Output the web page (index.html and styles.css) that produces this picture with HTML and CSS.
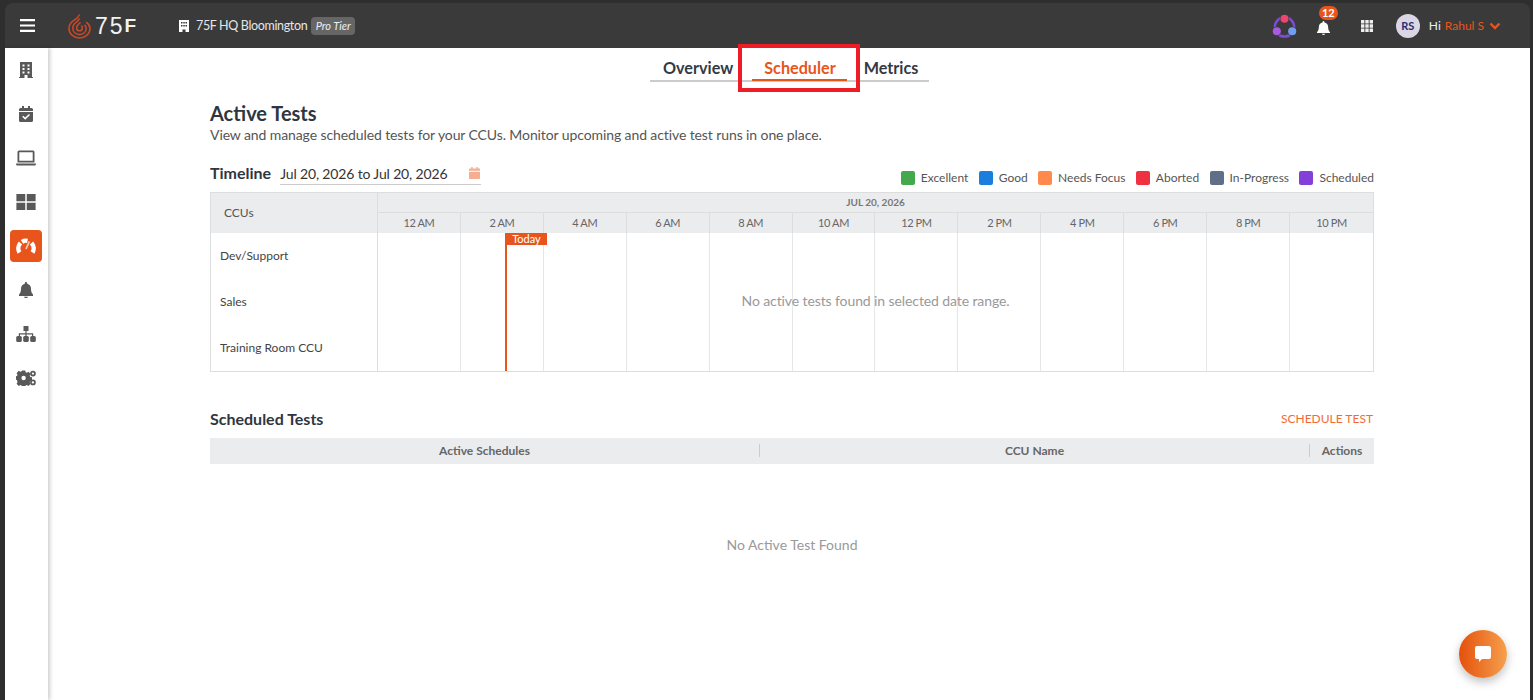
FILE: index.html
```html
<!DOCTYPE html>
<html lang="en">
<head>
    <meta charset="UTF-8">
    <meta name="viewport" content="width=device-width, initial-scale=1.0">
    <title>75F Scheduler</title>
    <link rel="stylesheet" href="styles.css">
</head>
<body>
<div class="app">
    <header class="topbar">
        <div class="top-left">
            <svg class="menu-icon" viewBox="0 0 14 12"><path d="M0 0h14v2H0zM0 5h14v2H0zM0 10h14v2H0z"/></svg>
            <svg class="flame" viewBox="0 0 24 26" fill="none" stroke="#c8482a" stroke-width="1.600">
                <path d="M12 1 C11 4 8 6 5 8 C2 10.500 1 13 1 15.500 A11 10 0 0 0 23 15.500 C23 12.500 21 10.500 19 9"/>
                <path d="M12 5 C11 8 8 9 6.500 11 C5 13 5 14.500 5 15.500 A7 6.500 0 0 0 19 15.500 C19 14 18 12.500 17 12"/>
                <path d="M13 9 C11.500 11 9 12 9 15 A3 3 0 0 0 15 15 C15 14 14.500 13 13.500 13"/>
            </svg>
            <span class="brand">75<small>F</small></span>
            <svg class="site-icon" viewBox="0 0 10 12"><path fill-rule="evenodd" d="M0 0h10v12H6.500V9.500h-3V12H0zM2 2v1.500h1.500V2zM4.300 2v1.500h1.500V2zM6.500 2v1.500H8V2zM2 5v1.500h1.500V5zM4.300 5v1.500h1.500V5zM6.500 5v1.500H8V5z"/></svg>
            <span class="site-name">75F HQ Bloomington</span>
            <span class="tier">Pro Tier</span>
        </div>
        <div class="top-right">
            <svg class="apps-logo" viewBox="0 0 26 26">
                <circle cx="13" cy="14.500" r="10" fill="none" stroke="#7a4fd0" stroke-width="2.600"/>
                <circle cx="13" cy="6" r="5" fill="#3a3a3a"/>
                <circle cx="5" cy="19" r="5" fill="#3a3a3a"/>
                <circle cx="21" cy="19" r="5" fill="#3a3a3a"/>
                <circle cx="13" cy="6" r="4.200" fill="#ee4472"/>
                <circle cx="5" cy="19" r="4.200" fill="#a75be0"/>
                <circle cx="21" cy="19" r="4.200" fill="#6f9df0"/>
            </svg>
            <div class="bell-wrap">
                <svg class="bell" viewBox="0 0 14 15"><path d="M7 0a1 1 0 0 1 1 1v.7c2.400.4 4 2.400 4 4.800 0 3.200 1 4.300 2 5.500v1H0v-1c1-1.200 2-2.300 2-5.500 0-2.400 1.600-4.400 4-4.800V1a1 1 0 0 1 1-1zM5.200 13.800h3.600a1.800 1.200 0 0 1-3.600 0z"/></svg>
                <span class="badge">12</span>
            </div>
            <svg class="grid-icon" viewBox="0 0 12 12"><path d="M0 0h3.400v3.400H0zM4.300 0h3.400v3.400H4.300zM8.600 0H12v3.400H8.600zM0 4.300h3.400v3.400H0zM4.300 4.300h3.400v3.400H4.300zM8.600 4.300H12v3.400H8.600zM0 8.600h3.400V12H0zM4.300 8.600h3.400V12H4.300zM8.600 8.600H12V12H8.600z"/></svg>
            <span class="avatar">RS</span>
            <span class="hi">Hi</span>
            <span class="user">Rahul S</span>
            <svg class="chevron" viewBox="0 0 12 8"><path d="M1.500 1.500 6 6l4.500-4.500" fill="none" stroke="#e8551c" stroke-width="2.400"/></svg>
        </div>
    </header>

    <div class="page">
        <nav class="sidebar">
            <a class="side-item"><svg viewBox="0 0 14 16"><path fill-rule="evenodd" d="M1 0h12v15h1v1H8.500v-3h-3v3H0v-1h1zM3.500 2.500v2H5.500v-2zM8.500 2.500v2h2v-2zM3.500 6v2H5.500V6zM8.500 6v2h2V6zM3.500 9.500v2H5.500v-2zM8.500 9.500v2h2v-2z"/></svg></a>
            <a class="side-item"><svg viewBox="0 0 14 16"><path fill-rule="evenodd" d="M3 0h2v2h4V0h2v2h1.500A1.500 1.500 0 0 1 14 3.500V5H0V3.500A1.500 1.500 0 0 1 1.500 2H3zM0 6h14v8.500a1.500 1.500 0 0 1-1.500 1.500h-11A1.500 1.500 0 0 1 0 14.500zM10 8 6.200 11.600 4.200 9.700 3.200 10.700 6.200 13.700 11 9z"/></svg></a>
            <a class="side-item"><svg class="wide" viewBox="0 0 20 15"><path fill-rule="evenodd" d="M3 0h14a1.500 1.500 0 0 1 1.500 1.500V12h-17V1.500A1.500 1.500 0 0 1 3 0zM3.300 1.800v8.400h13.400V1.800zM0 13h20v.5a1.500 1.500 0 0 1-1.500 1.500h-17A1.500 1.500 0 0 1 0 13.500z"/></svg></a>
            <a class="side-item"><svg class="wide" viewBox="0 0 18 15"><path d="M0 0h8.300v6.800H0zM9.700 0H18v6.800H9.700zM0 8.200h8.300V15H0zM9.700 8.200H18V15H9.700z"/></svg></a>
            <a class="side-item active"><svg class="wide" viewBox="0 0 20 16" fill="none" stroke="#fff" stroke-width="4.400"><path d="M3.500 14.500A7.800 7.800 0 0 1 4.500 5"/><path d="M6 3.800A7.800 7.800 0 0 1 11.500 2.800"/><path d="M15.500 5A7.800 7.800 0 0 1 16.500 14.500"/><path d="M10 11 13.300 3.500" stroke-width="1.800" stroke="#f6c9b4"/></svg></a>
            <a class="side-item"><svg viewBox="0 0 14 16"><path d="M7 0a1.200 1.200 0 0 1 1.200 1.200v.6C10.700 2.300 12 4.300 12 6.800c0 3.400 1 4.600 2 5.700V14H0v-1.500c1-1.100 2-2.300 2-5.700 0-2.500 1.300-4.500 3.800-5v-.6A1.200 1.200 0 0 1 7 0zM5 14.800h4A2 1.300 0 0 1 5 14.800z"/></svg></a>
            <a class="side-item"><svg class="wide" viewBox="0 0 20 16">
                <path d="M7.500 0h5v5h-5zM2.800 7.200h14.400v3h-1.200V8.400H10.600v1.800H9.400V8.400H4v1.800H2.800zM9.400 5h1.200v3H9.400z"/>
                <rect x="0.200" y="10" width="5.600" height="6" rx="1.500"/>
                <rect x="7.200" y="10" width="5.600" height="6" rx="1.500"/>
                <rect x="14.200" y="10" width="5.600" height="6" rx="1.500"/>
            </svg></a>
            <a class="side-item"><svg class="wide" viewBox="0 0 21 16">
                <path fill-rule="evenodd" d="M6.300 1.500h3.400l.4 1.900 1.300.6 1.700-1 2.300 2.400-1 1.600.6 1.400 1.800.4v3.400l-1.800.4-.6 1.400 1 1.600-2.300 2.300-1.700-1-1.300.6-.4 1.500H6.300l-.4-1.500-1.300-.6-1.700 1-2.300-2.300 1-1.600L1 11.600 0 11.300V7.700l1-.3.6-1.400-1-1.600 2.300-2.400 1.700 1 1.300-.6zM8 7.200a2.300 2.300 0 1 0 0 4.600 2.300 2.300 0 0 0 0-4.600z" transform="translate(0 -1.500)"/>
                <circle cx="17.800" cy="3.300" r="2.100" fill="none" stroke="#595959" stroke-width="1.800"/>
                <circle cx="17.800" cy="12.700" r="2.100" fill="none" stroke="#595959" stroke-width="1.800"/>
            </svg></a>
        </nav>

        <main class="content">
            <div class="tabs">
                <a class="tab">Overview</a>
                <a class="tab tab-active">Scheduler</a>
                <a class="tab">Metrics</a>
            </div>
            <div class="highlight"></div>

            <h1 class="heading">Active Tests</h1>
            <p class="sub">View and manage scheduled tests for your CCUs. Monitor upcoming and active test runs in one place.</p>

            <div class="timeline-bar">
                <h2 class="section-title">Timeline</h2>
                <div class="date-range">
                    <span>Jul 20, 2026 to Jul 20, 2026</span>
                    <svg class="cal-icon" viewBox="0 0 12 13"><path d="M2.500 0h1.500v1.500h4V0h1.500v1.500h1A1 1 0 0 1 12 2.500V4H0V2.500a1 1 0 0 1 1-1h1.500zM0 5h12v7a1 1 0 0 1-1 1H1a1 1 0 0 1-1-1z"/></svg>
                </div>
                <ul class="legend">
                    <li><i class="dot excellent"></i>Excellent</li>
                    <li><i class="dot good"></i>Good</li>
                    <li><i class="dot focus"></i>Needs Focus</li>
                    <li><i class="dot aborted"></i>Aborted</li>
                    <li><i class="dot progress"></i>In-Progress</li>
                    <li><i class="dot scheduled"></i>Scheduled</li>
                </ul>
            </div>

            <div class="timeline">
                <div class="ccu-head">CCUs</div>
                <div class="date-head">JUL 20, 2026</div>
                <div class="hours">
                    <span>12 AM</span><span>2 AM</span><span>4 AM</span><span>6 AM</span><span>8 AM</span><span>10 AM</span>
                    <span>12 PM</span><span>2 PM</span><span>4 PM</span><span>6 PM</span><span>8 PM</span><span>10 PM</span>
                </div>
                <div class="ccu-list">
                    <div>Dev/Support</div>
                    <div>Sales</div>
                    <div>Training Room CCU</div>
                </div>
                <div class="track">
                    <i></i><i></i><i></i><i></i><i></i><i></i><i></i><i></i><i></i><i></i><i></i><i></i>
                    <div class="today"><span>Today</span></div>
                    <div class="no-tests">No active tests found in selected date range.</div>
                </div>
            </div>

            <div class="sched-head">
                <h2 class="section-title">Scheduled Tests</h2>
                <a class="sched-link">SCHEDULE TEST</a>
            </div>
            <div class="sched-table">
                <div class="col-a">Active Schedules</div>
                <div class="col-b">CCU Name</div>
                <div class="col-c">Actions</div>
            </div>
            <div class="empty">No Active Test Found</div>
        </main>
    </div>

    <button class="chat"><svg viewBox="0 0 16 16"><path d="M2 0h12a2 2 0 0 1 2 2v9a2 2 0 0 1-2 2H7l-3 3v-3H2a2 2 0 0 1-2-2V2a2 2 0 0 1 2-2z"/></svg></button>
</div>
</body>
</html>
```

FILE: styles.css
```css
* {
    padding: 0;
    margin: 0;
    box-sizing: border-box;
}
html, body {
    height: 100%;
    background: #2e2e2e;
    font-family: Lato, "Open Sans", Arial, sans-serif;
    overflow: hidden;
}
.app {
    height: 700px;
    padding: 3px 3px 0 5px;
    display: flex;
    flex-direction: column;
}

/* top bar */
.topbar {
    height: 45px;
    flex: none;
    background: #3a3a3a;
    border-radius: 8px 8px 0 0;
    display: flex;
    justify-content: space-between;
    align-items: center;
    color: #fff;
}
.top-left, .top-right {
    display: flex;
    align-items: center;
}
.menu-icon {
    width: 15px;
    height: 13px;
    margin-left: 15px;
    fill: #fff;
}
.flame {
    width: 23px;
    height: 26px;
    margin-left: 33px;
}
.brand {
    margin-left: 4px;
    width: 43px;
    font-family: "Liberation Sans", Arial, sans-serif;
    font-size: 23px;
    line-height: 24px;
    letter-spacing: 2px;
    color: #f2f2f2;
}
.brand small {
    font-size: 19px;
    font-weight: 700;
    letter-spacing: 0;
    vertical-align: 2px;
}
.site-icon {
    width: 10px;
    height: 12px;
    margin-left: 41px;
    fill: #fff;
}
.site-name {
    margin-left: 7px;
    font-size: 12.500px;
    letter-spacing: -0.350px;
    color: #e6e6e6;
}
.tier {
    margin-left: 4px;
    width: 44px;
    height: 18px;
    line-height: 18px;
    text-align: center;
    background: #666;
    border-radius: 4px;
    font-size: 11px;
    font-style: italic;
    color: #eee;
}
.apps-logo {
    width: 25px;
    height: 25px;
}
.bell-wrap {
    position: relative;
    margin-left: 20px;
    width: 14px;
    height: 15px;
    margin-top: 5px;
}
.bell {
    display: block;
    width: 13px;
    height: 14px;
    fill: #fff;
}
.badge {
    position: absolute;
    top: -15px;
    left: 2px;
    width: 19px;
    height: 14px;
    line-height: 14px;
    border-radius: 7px;
    background: #e8551c;
    color: #fff;
    font-size: 11px;
    font-weight: 700;
    text-align: center;
}
.grid-icon {
    width: 12px;
    height: 12px;
    margin-left: 30px;
    fill: #eee;
}
.avatar {
    margin-left: 23px;
    width: 24px;
    height: 24px;
    line-height: 24px;
    border-radius: 50%;
    background: #d9d6e6;
    color: #2b2b6b;
    font-size: 11px;
    font-weight: 700;
    text-align: center;
}
.hi {
    margin-left: 9px;
    font-size: 12px;
    color: #e8f0f0;
}
.user {
    margin-left: 4px;
    font-size: 12px;
    color: #e8551c;
}
.chevron {
    width: 12px;
    height: 8px;
    margin: 0 29px 0 5px;
}

/* page */
.page {
    flex: 1;
    display: flex;
    background: #fff;
    min-height: 0;
}
.sidebar {
    width: 43px;
    flex: none;
    background: #fff;
    box-shadow: 2px 0 4px rgba(0,0,0,.2);
    display: flex;
    flex-direction: column;
    align-items: center;
    padding: 6px 1px 0 0;
    position: relative;
}
.side-item {
    width: 32px;
    height: 32px;
    margin-bottom: 12px;
    border-radius: 4px;
    display: flex;
    justify-content: center;
    align-items: center;
}
.side-item svg {
    width: 14px;
    height: 16px;
    fill: #595959;
}
.side-item svg.wide {
    width: 20px;
    height: 16px;
}
.side-item.active {
    background: #e8551c;
}
.side-item.active svg {
    fill: none;
}

.content {
    flex: 1;
    position: relative;
    padding: 0 156px 0 162px;
}
.tabs {
    width: 279px;
    height: 34px;
    margin-left: 440px;
    display: flex;
    align-items: flex-end;
    padding-left: 13px;
    border-bottom: 2px solid #ccc;
    font-size: 16.200px;
    font-weight: 700;
    color: #333a45;
}
.tab {
    height: 28px;
    line-height: 31px;
    position: relative;
}
.tab-active {
    margin: 0 28px 0 31px;
    color: #e8551c;
}
.tab-active::after {
    content: "";
    position: absolute;
    left: -12px;
    right: -11px;
    bottom: -1px;
    height: 2px;
    background: #e8551c;
}
.highlight {
    position: absolute;
    left: 690px;
    top: -4px;
    width: 122px;
    height: 48px;
    border: 4px solid #ee1c25;
}

.heading {
    margin-top: 18px;
    font-size: 20px;
    line-height: 26px;
    font-weight: 700;
    color: #2f3640;
}
.sub {
    font-size: 14px;
    line-height: 18px;
    letter-spacing: -0.100px;
    color: #555;
}
.timeline-bar {
    margin-top: 18px;
    height: 30px;
    display: flex;
    align-items: flex-start;
}
.section-title {
    font-size: 16px;
    line-height: 22px;
    font-weight: 700;
    color: #2f3640;
}
.date-range {
    margin-left: 9px;
    width: 201px;
    height: 23px;
    padding-top: 3px;
    border-bottom: 1px solid #ccc;
    display: flex;
    justify-content: space-between;
    font-size: 14px;
    line-height: 18px;
    letter-spacing: -0.150px;
    color: #333;
}
.cal-icon {
    width: 11px;
    height: 12px;
    margin: 2px 1px 0 0;
    fill: #f5ae90;
}
.legend {
    margin-left: auto;
    padding-top: 8px;
    display: flex;
    gap: 10.400px;
    list-style: none;
    font-size: 12px;
    line-height: 15px;
    color: #555;
}
.legend li {
    display: flex;
    align-items: center;
}
.dot {
    width: 14px;
    height: 14px;
    border-radius: 2px;
    margin-right: 6px;
}
.excellent { background: #43a94d; }
.good { background: #1a7fdc; }
.focus { background: #ff8a4c; }
.aborted { background: #ee3240; }
.progress { background: #5f6f88; }
.scheduled { background: #8340d9; }

/* timeline grid */
.timeline {
    display: grid;
    grid-template-columns: 167px 1fr;
    grid-template-rows: 20px 20px 138px;
    border: 1px solid #ddd;
    font-size: 12px;
    color: #666;
}
.ccu-head {
    grid-row: 1 / 3;
    background: #ebecee;
    padding-left: 13px;
    border-right: 1px solid #ddd;
    font-size: 12px;
    line-height: 39px;
    color: #555;
}
.date-head {
    background: #ebecee;
    text-align: center;
    font-size: 10px;
    font-weight: 700;
    line-height: 19px;
    color: #777;
    border-bottom: 1px solid #ddd;
}
.hours {
    display: grid;
    grid-template-columns: repeat(12, 1fr);
    background: #ebecee;
}
.hours span {
    text-align: center;
    font-size: 11px;
    letter-spacing: -0.400px;
    line-height: 20px;
    border-right: 1px solid #ddd;
    color: #666;
}
.hours span:last-child {
    border-right: 0;
}
.ccu-list {
    border-right: 1px solid #ddd;
    font-size: 12px;
    color: #444;
    padding-left: 9px;
}
.ccu-list div {
    height: 46px;
    line-height: 45px;
}
.track {
    position: relative;
    display: grid;
    grid-template-columns: repeat(12, 1fr);
}
.track i {
    border-right: 1px solid #e6e6e6;
}
.track i:last-of-type {
    border-right: 0;
}
.today {
    position: absolute;
    left: 127px;
    top: 0;
    bottom: 0;
    border-left: 2px solid #e8551c;
}
.today span {
    display: block;
    width: 41px;
    margin-left: -1px;
    height: 12px;
    line-height: 12px;
    background: #e8551c;
    color: #fff;
    font-size: 11px;
    text-align: center;
}
.no-tests {
    position: absolute;
    left: 0;
    right: 0;
    top: 59px;
    text-align: center;
    font-size: 14px;
    letter-spacing: -0.100px;
    line-height: 18px;
    color: #999;
}

/* scheduled tests */
.sched-head {
    margin-top: 36px;
    height: 30px;
    display: flex;
    justify-content: space-between;
    align-items: flex-start;
}
.sched-link {
    font-size: 12px;
    line-height: 22px;
    color: #f26a35;
    margin-right: 1px;
}
.sched-table {
    height: 26px;
    padding-bottom: 2px;
    display: grid;
    grid-template-columns: 550px 550px 1fr;
    align-items: center;
    background: #ebecee;
    font-size: 12px;
    font-weight: 700;
    color: #666;
    text-align: center;
}
.col-a, .col-b {
    border-right: 1px solid #ccc;
    height: 13px;
    line-height: 13px;
}
.empty {
    margin-top: 72px;
    text-align: center;
    font-size: 14px;
    line-height: 18px;
    color: #999;
}
.chat {
    position: absolute;
    left: 1459px;
    top: 630px;
    width: 48px;
    height: 48px;
    border: 0;
    border-radius: 50%;
    background: linear-gradient(90deg, #e4510c, #f6a04d);
    box-shadow: 0 4px 10px rgba(0,0,0,.25);
    display: flex;
    justify-content: center;
    align-items: center;
}
.chat svg {
    width: 16px;
    height: 16px;
    fill: #fff;
}
```
